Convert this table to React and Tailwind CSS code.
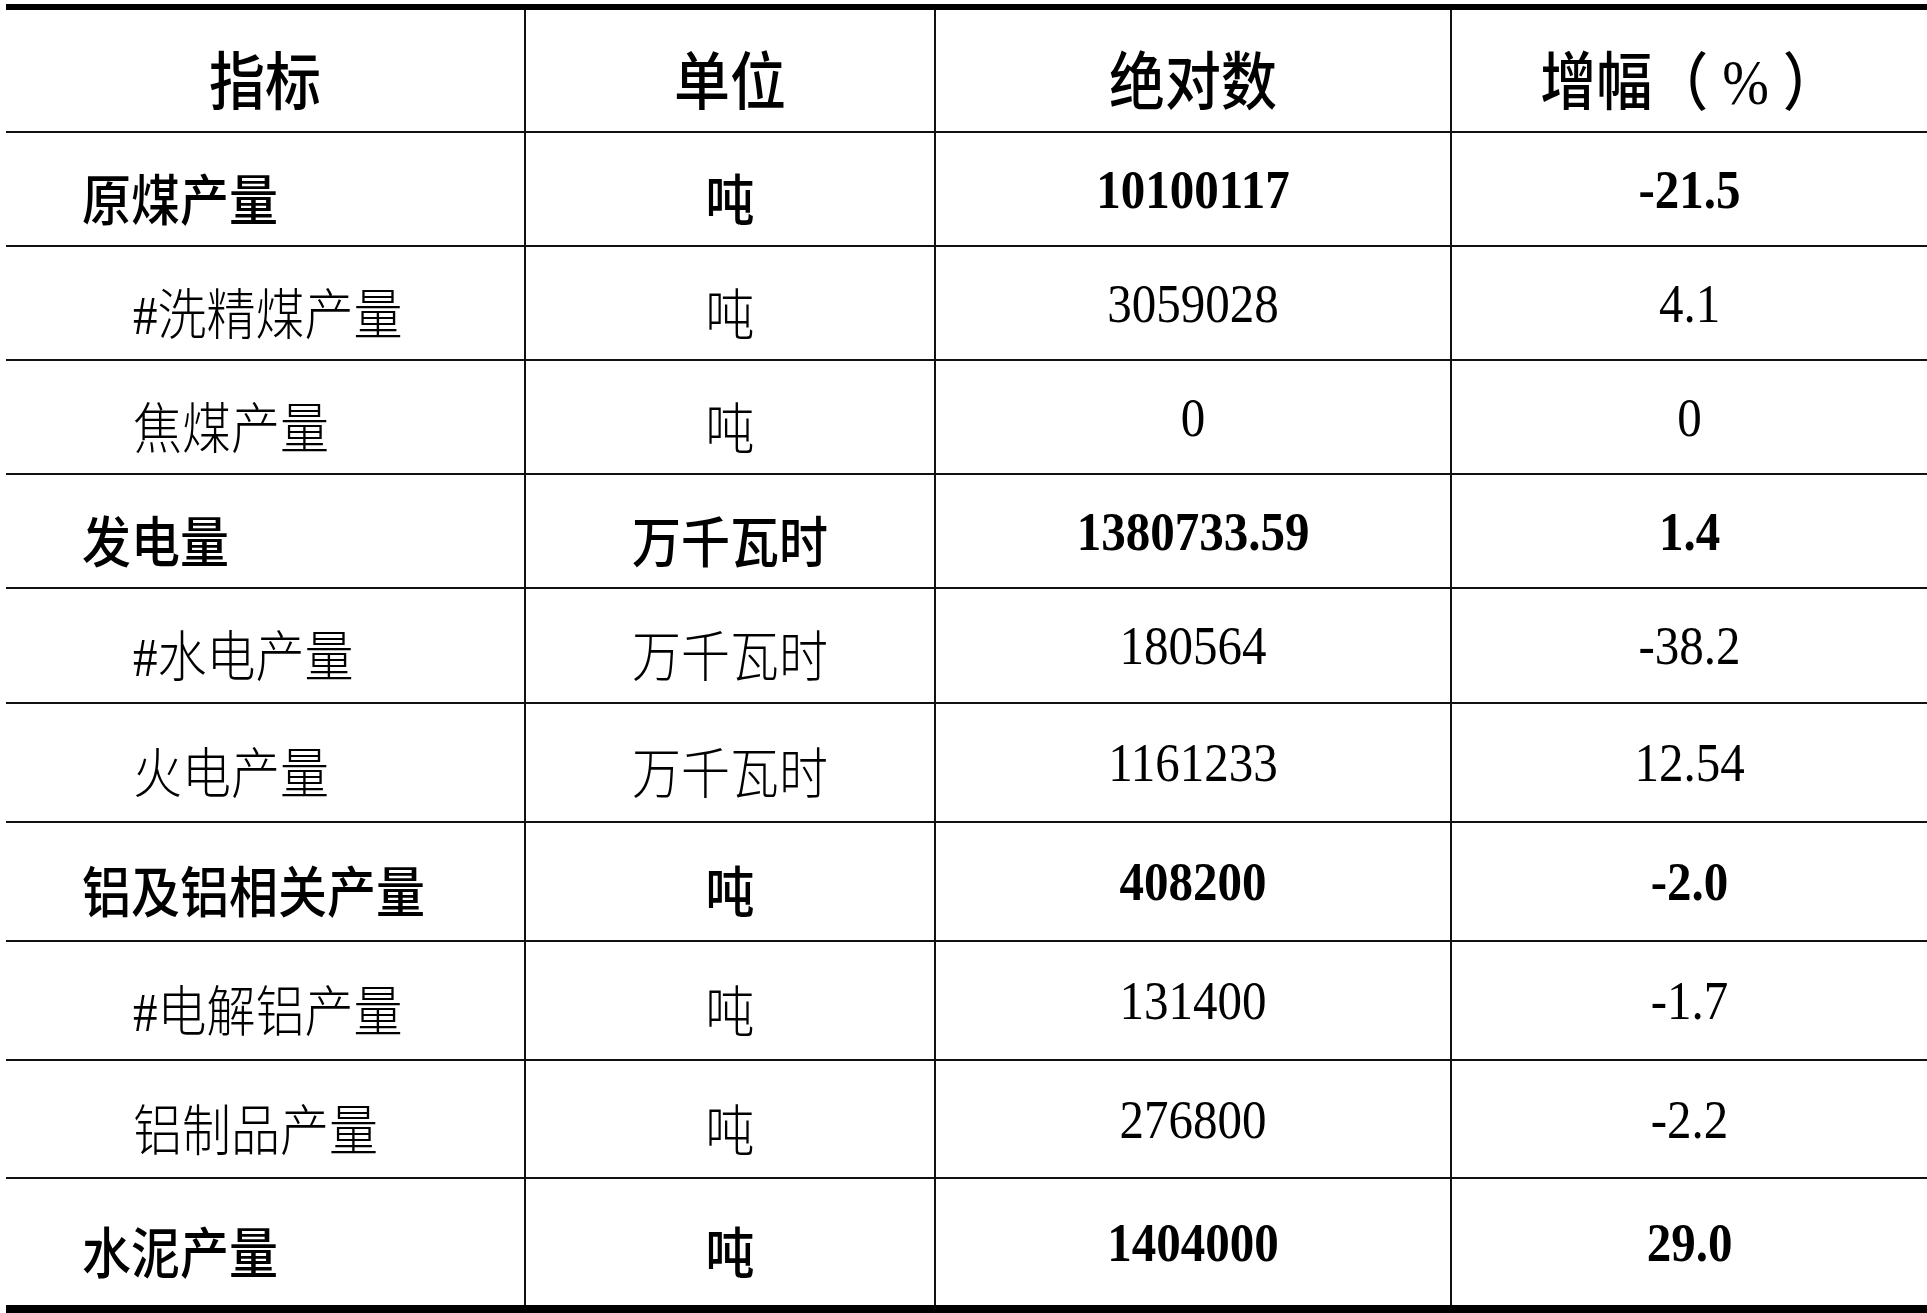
const rows = [
  { name: '原煤产量', unit: '吨', value: '10100117', pct: '-21.5', bold: true, h: 'h-[114px]' },
  { name: '#洗精煤产量', unit: '吨', value: '3059028', pct: '4.1', h: 'h-[114px]' },
  { name: '焦煤产量', unit: '吨', value: '0', pct: '0', h: 'h-[114px]' },
  { name: '发电量', unit: '万千瓦时', value: '1380733.59', pct: '1.4', bold: true, h: 'h-[114px]' },
  { name: '#水电产量', unit: '万千瓦时', value: '180564', pct: '-38.2', h: 'h-[115px]' },
  { name: '火电产量', unit: '万千瓦时', value: '1161233', pct: '12.54', h: 'h-[119px]' },
  { name: '铝及铝相关产量', unit: '吨', value: '408200', pct: '-2.0', bold: true, h: 'h-[119px]' },
  { name: '#电解铝产量', unit: '吨', value: '131400', pct: '-1.7', h: 'h-[119px]' },
  { name: '铝制品产量', unit: '吨', value: '276800', pct: '-2.2', h: 'h-[118px]' },
  { name: '水泥产量', unit: '吨', value: '1404000', pct: '29.0', bold: true, h: 'h-[134px]', last: true },
]

const font = "font-['Liberation_Serif','Noto_Sans_CJK_SC',serif]"

function Cjk({ children, bold }) {
  return (
    <span
      className={`inline-block whitespace-pre scale-y-[1.12] translate-y-[12px] ${bold ? 'font-medium' : 'font-light'}`}
    >
      {children}
    </span>
  )
}

function Num({ children, bold }) {
  return (
    <span className={`inline-block scale-y-[1.1] ${bold ? 'font-bold' : 'font-normal'}`}>
      {children}
    </span>
  )
}

export default function App() {
  return (
    <div className={`w-[1927px] h-[1313px] overflow-hidden bg-white text-black ${font}`}>
      <div className="mt-[4px] ml-[6px] border-t-[6px] border-black">
        <div className="grid grid-cols-[518px_410px_516px_1fr] h-[123px] border-b-2 border-[#111] text-[56px] leading-none">
          <div className="flex items-center justify-center">
            <Cjk bold>指标</Cjk>
          </div>
          <div className="flex items-center justify-center border-l-2 border-[#111]">
            <Cjk bold>单位</Cjk>
          </div>
          <div className="flex items-center justify-center border-l-2 border-[#111]">
            <Cjk bold>绝对数</Cjk>
          </div>
          <div className="flex items-center justify-center border-l-2 border-[#111]">
            <Cjk bold>增幅（ % ）</Cjk>
          </div>
        </div>
        {rows.map((r) => (
          <div
            key={r.name}
            className={`grid grid-cols-[518px_410px_516px_1fr] ${r.h} text-[49px] leading-none ${
              r.last ? 'border-b-[8px] border-black' : 'border-b-2 border-[#111]'
            }`}
          >
            <div className={`flex items-center ${r.bold ? 'pl-[76px]' : 'pl-[127px]'}`}>
              <Cjk bold={r.bold}>{r.name}</Cjk>
            </div>
            <div className="flex items-center justify-center border-l-2 border-[#111]">
              <Cjk bold={r.bold}>{r.unit}</Cjk>
            </div>
            <div className="flex items-center justify-center border-l-2 border-[#111]">
              <Num bold={r.bold}>{r.value}</Num>
            </div>
            <div className="flex items-center justify-center border-l-2 border-[#111]">
              <Num bold={r.bold}>{r.pct}</Num>
            </div>
          </div>
        ))}
      </div>
    </div>
  )
}
